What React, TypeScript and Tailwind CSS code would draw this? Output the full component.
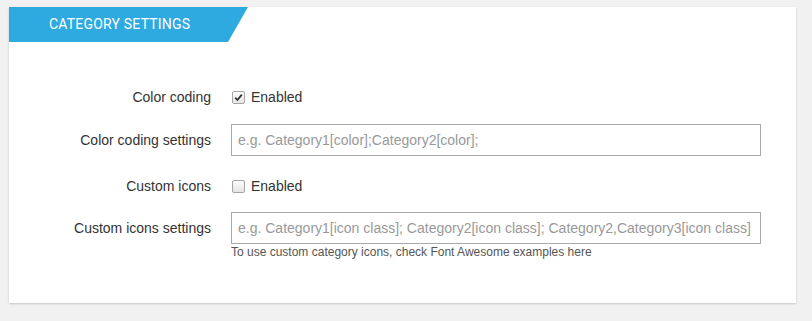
import { useState } from 'react';

function Checkbox({ checked }: { checked: boolean }) {
  return (
    <span className="flex h-[13px] w-[13px] items-center justify-center rounded-[2px] border border-[#a5a5a5] bg-gradient-to-b from-[#fcfcfc] to-[#e6e6e6]">
      {checked && (
        <svg width="9" height="9" viewBox="0 0 9 9">
          <path d="M1.2 4.6 L3.5 7 L7.8 1.6" fill="none" stroke="#333" strokeWidth="1.8" />
        </svg>
      )}
    </span>
  );
}

export default function App() {
  const [colorCoding, setColorCoding] = useState(true);
  const [customIcons, setCustomIcons] = useState(false);

  return (
    <div className="h-[321px] w-[812px] bg-[#f1f1f1] pt-[7px] pl-[9px] font-['Liberation_Sans',Arial,sans-serif] text-[14px] text-[#333]">
      <div className="h-[296px] w-[787px] bg-white shadow-[0_1px_2px_rgba(0,0,0,0.18)]">
        <div className="flex h-[35px] w-[239px] items-center bg-[#2eaae1] pl-[40px] font-['Roboto',sans-serif] text-[14px] tracking-[0.2px] text-white [clip-path:polygon(0_0,100%_0,calc(100%-20px)_100%,0_100%)]">
          CATEGORY SETTINGS
        </div>

        <div className="pt-[45px]">
          <div className="flex h-[20px] items-center">
            <label className="w-[202px] text-right">Color coding</label>
            <button
              onClick={() => setColorCoding(!colorCoding)}
              className="ml-[21px] flex items-center gap-[6px]"
            >
              <Checkbox checked={colorCoding} />
              <span>Enabled</span>
            </button>
          </div>

          <div className="mt-[17px] flex items-center">
            <label className="w-[202px] text-right">Color coding settings</label>
            <input
              type="text"
              placeholder="e.g. Category1[color];Category2[color];"
              className="ml-[20px] h-[32px] w-[530px] border border-[#aaa] px-[6px] text-[14px] outline-none placeholder:text-[#999]"
            />
          </div>

          <div className="mt-[20px] flex h-[20px] items-center">
            <label className="w-[202px] text-right">Custom icons</label>
            <button
              onClick={() => setCustomIcons(!customIcons)}
              className="ml-[21px] flex items-center gap-[6px]"
            >
              <Checkbox checked={customIcons} />
              <span>Enabled</span>
            </button>
          </div>

          <div className="mt-[16px] flex items-center">
            <label className="w-[202px] text-right">Custom icons settings</label>
            <input
              type="text"
              placeholder="e.g. Category1[icon class]; Category2[icon class]; Category2,Category3[icon class]"
              className="ml-[20px] h-[32px] w-[530px] border border-[#aaa] px-[6px] text-[14px] outline-none placeholder:text-[#999]"
            />
          </div>
          <p className="ml-[222px] mt-[1px] text-[12px] leading-[14px] text-[#555]">
            To use custom category icons, check Font Awesome examples here
          </p>
        </div>
      </div>
    </div>
  );
}
